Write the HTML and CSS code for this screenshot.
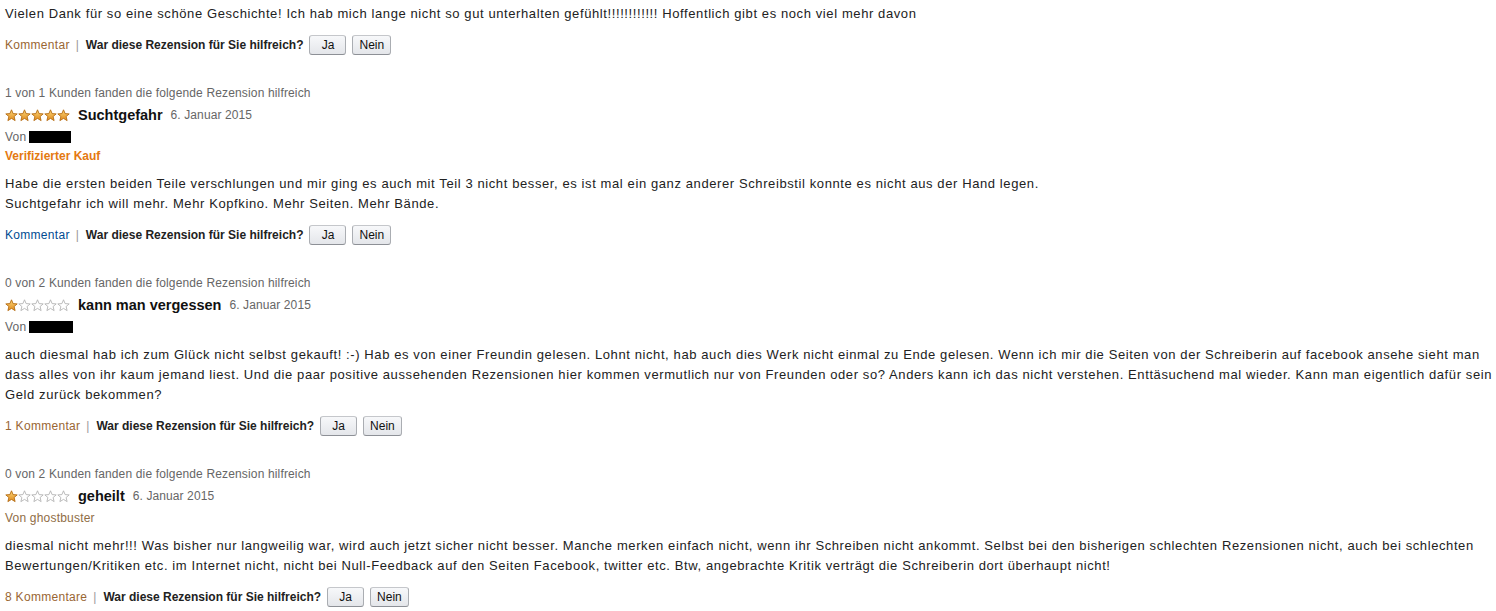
FILE: index.html
```html
<!DOCTYPE html>
<html lang="de">
<head>
    <meta charset="UTF-8">
    <title>Kundenrezensionen</title>
    <link rel="stylesheet" href="styles.css">
</head>
<body>
    <svg width="0" height="0" class="defs">
        <defs>
            <linearGradient id="star-fill" x1="0" y1="0" x2="0" y2="1">
                <stop offset="0" stop-color="#fbd77a"/>
                <stop offset="1" stop-color="#e08a1c"/>
            </linearGradient>
            <path id="star" d="M6.5 0.8 L8.1 4.6 L12.2 4.9 L9.1 7.5 L10.1 11.6 L6.5 9.4 L2.9 11.6 L3.9 7.5 L0.8 4.9 L4.9 4.6 Z"/>
        </defs>
    </svg>

    <div class="review">
        <p class="review-text">Vielen Dank für so eine schöne Geschichte! Ich hab mich lange nicht so gut unterhalten gefühlt!!!!!!!!!!!! Hoffentlich gibt es noch viel mehr davon</p>
        <div class="actions">
            <a href="#" class="comment-link visited">Kommentar</a>
            <span class="sep">|</span>
            <span class="question">War diese Rezension für Sie hilfreich?</span>
            <button class="vote">Ja</button>
            <button class="vote">Nein</button>
        </div>
    </div>

    <div class="review">
        <div class="helpful">1 von 1 Kunden fanden die folgende Rezension hilfreich</div>
        <div class="title-row">
            <span class="stars">
                <svg class="star full"><use href="#star"/></svg><svg class="star full"><use href="#star"/></svg><svg class="star full"><use href="#star"/></svg><svg class="star full"><use href="#star"/></svg><svg class="star full"><use href="#star"/></svg>
            </span>
            <span class="title">Suchtgefahr</span>
            <span class="date">6. Januar 2015</span>
        </div>
        <div class="author">Von <span class="redacted"></span></div>
        <div class="verified">Verifizierter Kauf</div>
        <p class="review-text">Habe die ersten beiden Teile verschlungen und mir ging es auch mit Teil 3 nicht besser, es ist mal ein ganz anderer Schreibstil konnte es nicht aus der Hand legen.<br>Suchtgefahr ich will mehr. Mehr Kopfkino. Mehr Seiten. Mehr Bände.</p>
        <div class="actions">
            <a href="#" class="comment-link">Kommentar</a>
            <span class="sep">|</span>
            <span class="question">War diese Rezension für Sie hilfreich?</span>
            <button class="vote">Ja</button>
            <button class="vote">Nein</button>
        </div>
    </div>

    <div class="review">
        <div class="helpful">0 von 2 Kunden fanden die folgende Rezension hilfreich</div>
        <div class="title-row">
            <span class="stars">
                <svg class="star full"><use href="#star"/></svg><svg class="star"><use href="#star"/></svg><svg class="star"><use href="#star"/></svg><svg class="star"><use href="#star"/></svg><svg class="star"><use href="#star"/></svg>
            </span>
            <span class="title">kann man vergessen</span>
            <span class="date">6. Januar 2015</span>
        </div>
        <div class="author">Von <span class="redacted wide"></span></div>
        <p class="review-text">auch diesmal hab ich zum Glück nicht selbst gekauft! :-) Hab es von einer Freundin gelesen. Lohnt nicht, hab auch dies Werk nicht einmal zu Ende gelesen. Wenn ich mir die Seiten von der Schreiberin auf facebook ansehe sieht man dass alles von ihr kaum jemand liest. Und die paar positive aussehenden Rezensionen hier kommen vermutlich nur von Freunden oder so? Anders kann ich das nicht verstehen. Enttäsuchend mal wieder. Kann man eigentlich dafür sein Geld zurück bekommen?</p>
        <div class="actions">
            <a href="#" class="comment-link visited">1 Kommentar</a>
            <span class="sep">|</span>
            <span class="question">War diese Rezension für Sie hilfreich?</span>
            <button class="vote">Ja</button>
            <button class="vote">Nein</button>
        </div>
    </div>

    <div class="review">
        <div class="helpful">0 von 2 Kunden fanden die folgende Rezension hilfreich</div>
        <div class="title-row">
            <span class="stars">
                <svg class="star full"><use href="#star"/></svg><svg class="star"><use href="#star"/></svg><svg class="star"><use href="#star"/></svg><svg class="star"><use href="#star"/></svg><svg class="star"><use href="#star"/></svg>
            </span>
            <span class="title">geheilt</span>
            <span class="date">6. Januar 2015</span>
        </div>
        <div class="author visited">Von ghostbuster</div>
        <p class="review-text">diesmal nicht mehr!!! Was bisher nur langweilig war, wird auch jetzt sicher nicht besser. Manche merken einfach nicht, wenn ihr Schreiben nicht ankommt. Selbst bei den bisherigen schlechten Rezensionen nicht, auch bei schlechten Bewertungen/Kritiken etc. im Internet nicht, nicht bei Null-Feedback auf den Seiten Facebook, twitter etc. Btw, angebrachte Kritik verträgt die Schreiberin dort überhaupt nicht!</p>
        <div class="actions">
            <a href="#" class="comment-link visited">8 Kommentare</a>
            <span class="sep">|</span>
            <span class="question">War diese Rezension für Sie hilfreich?</span>
            <button class="vote">Ja</button>
            <button class="vote">Nein</button>
        </div>
    </div>
</body>
</html>
```

FILE: styles.css
```css
body {
    margin: 0;
    padding: 4px 0 0 5px;
    font-family: "Liberation Sans", Arial, sans-serif;
    font-size: 13px;
    color: #222;
    background: #fff;
}
.defs {
    position: absolute;
}
.review {
    margin-bottom: 26px;
}
.review-text {
    margin: 8px 0 0;
    line-height: 20px;
    letter-spacing: 0.6px;
}
.review-text:first-child {
    margin-top: 0;
}
.helpful {
    font-size: 12px;
    line-height: 20px;
    letter-spacing: 0.15px;
    color: #666;
}
.title-row {
    display: flex;
    align-items: center;
    height: 24px;
}
.stars {
    display: flex;
    margin-right: 8px;
}
.star {
    width: 13px;
    height: 13px;
    fill: #fff;
    stroke: #b3b3b3;
    stroke-width: 0.9;
}
.star.full {
    fill: url(#star-fill);
    stroke: #b46b12;
}
.title {
    font-size: 14.5px;
    font-weight: bold;
    color: #111;
    margin-right: 8px;
}
.date {
    font-size: 12px;
    letter-spacing: 0.1px;
    color: #666;
}
.author {
    font-size: 12px;
    line-height: 20px;
    letter-spacing: 0.2px;
    color: #666;
    display: flex;
    align-items: center;
}
.author.visited {
    color: #8f6d45;
}
.redacted {
    display: inline-block;
    width: 42px;
    height: 12px;
    background: #000;
    margin-left: 3px;
}
.redacted.wide {
    width: 44px;
}
.verified {
    font-size: 12px;
    font-weight: bold;
    line-height: 19px;
    color: #e47911;
}
.actions {
    display: flex;
    align-items: center;
    height: 24px;
    margin-top: 9px;
    font-size: 12px;
}
.comment-link {
    color: #004b91;
    letter-spacing: 0.3px;
    text-decoration: none;
}
.comment-link.visited {
    color: #996633;
}
.sep {
    color: #999;
    margin: 0 7px 0 6px;
}
.question {
    font-weight: bold;
    color: #222;
    margin-right: 6px;
}
.vote {
    font-family: "Liberation Sans", Arial, sans-serif;
    font-size: 12px;
    color: #111;
    height: 20px;
    min-width: 37px;
    padding: 0 6px;
    margin-right: 6px;
    border: 1px solid #adb1b8;
    border-color: #c5c7cb #aaadb2 #8d9096;
    border-radius: 3px;
    background: linear-gradient(#f7f8fa, #e4e6ea);
    cursor: pointer;
}
```
